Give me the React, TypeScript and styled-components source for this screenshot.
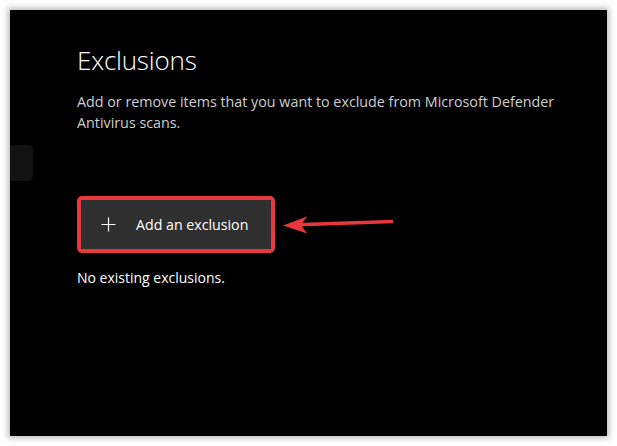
import React from 'react';
import styled, { createGlobalStyle } from 'styled-components';

const GlobalStyle = createGlobalStyle`
  html, body {
    margin: 0;
    padding: 0;
    background: #ffffff;
  }
  body {
    font-family: 'Open Sans', 'Liberation Sans', sans-serif;
  }
`;

const Page = styled.div`
  width: 617px;
  height: 446px;
  box-sizing: border-box;
  padding: 10px;
`;

const Window = styled.div`
  position: relative;
  width: 597px;
  height: 426px;
  background: #000000;
  box-shadow: 0 0 6px 2px rgba(0, 0, 0, 0.28);
  box-sizing: border-box;
  padding: 35px 0 0 67px;
  display: flex;
  flex-direction: column;
`;

const SideTab = styled.div`
  position: absolute;
  left: 0;
  top: 135px;
  width: 23px;
  height: 36px;
  background: #121212;
  border-radius: 0 5px 5px 0;
`;

const Title = styled.h1`
  margin: 0;
  font-family: 'Open Sans', sans-serif;
  font-weight: 300;
  font-size: 26px;
  line-height: 30px;
  color: #ffffff;
  letter-spacing: -0.2px;
`;

const Description = styled.p`
  margin: 16px 0 0 0;
  width: 490px;
  font-family: 'Open Sans', sans-serif;
  font-size: 14.3px;
  line-height: 21px;
  color: #cfcfcf;
`;

const Highlight = styled.div`
  margin-top: 63px;
  align-self: flex-start;
  display: flex;
  align-items: center;
  gap: 8px;
`;

const Outline = styled.div`
  border: 4px solid #e8383d;
  border-radius: 5px;
  background: #000;
`;

const AddButton = styled.button`
  width: 190px;
  height: 49px;
  display: flex;
  align-items: center;
  gap: 20px;
  padding: 0 0 0 20px;
  border: none;
  border-radius: 2px;
  background: #2f2f2f;
  color: #ffffff;
  font-family: 'Open Sans', sans-serif;
  font-size: 14.2px;
  cursor: pointer;
`;

const Empty = styled.p`
  margin: 15px 0 0 0;
  font-family: 'Open Sans', sans-serif;
  font-size: 14px;
  line-height: 20px;
  color: #ffffff;
`;

const PlusIcon = () => (
  <svg width="15" height="15" viewBox="0 0 15 15">
    <path d="M7.5 0.5v14M0.5 7.5h14" stroke="#ffffff" strokeWidth="1.2" fill="none" />
  </svg>
);

const Arrow = () => (
  <svg width="112" height="20" viewBox="0 0 112 20">
    <path d="M110 6.5 L14 9.8" stroke="#e8383d" strokeWidth="3.6" fill="none" strokeLinecap="butt" />
    <path d="M0 10.5 L24 1.5 L18 10 L24 18.5 Z" fill="#e8383d" />
  </svg>
);

export default function App() {
  return (
    <>
      <GlobalStyle />
      <Page>
        <Window>
          <SideTab />
          <Title>Exclusions</Title>
          <Description>
            Add or remove items that you want to exclude from Microsoft Defender Antivirus scans.
          </Description>
          <Highlight>
            <Outline>
              <AddButton>
                <PlusIcon />
                <span>Add an exclusion</span>
              </AddButton>
            </Outline>
            <Arrow />
          </Highlight>
          <Empty>No existing exclusions.</Empty>
        </Window>
      </Page>
    </>
  );
}
